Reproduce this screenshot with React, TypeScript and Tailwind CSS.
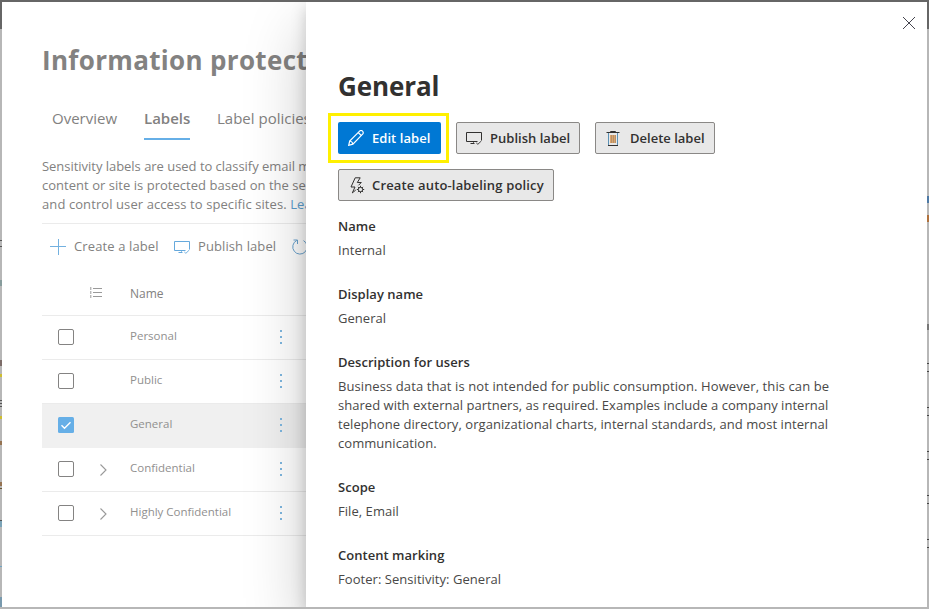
import React from "react";

const rows = [
  { name: "Personal" },
  { name: "Public" },
  { name: "General", checked: true },
  { name: "Confidential", group: true },
  { name: "Highly Confidential", group: true },
];

const leftEdge = [
  "top-[240px] h-px bg-[#555]",
  "top-[246px] h-px bg-[#555]",
  "top-[280px] h-[6px] bg-[#879c9c]",
  "top-[360px] h-[6px] bg-[#7c6c68]",
  "top-[374px] h-[3px] bg-[#cdbd31]",
  "top-[400px] h-px bg-[#555]",
  "top-[403px] h-px bg-[#555]",
  "top-[406px] h-px bg-[#555]",
  "top-[416px] h-[3px] bg-[#cdbd31]",
  "top-[441px] h-[4px] bg-[#957352]",
  "top-[482px] h-[4px] bg-[#957352]",
  "top-[488px] h-px bg-[#665533]",
  "top-[520px] h-px bg-[#555]",
  "top-[521px] h-[6px] bg-[#7ba3b7]",
  "top-[566px] h-px bg-[#6fa5c4]",
  "top-[597px] h-[10px] bg-[#7899ad]",
];

const rightEdge = [
  "top-[196px] h-[7px] bg-[#4d79a5]",
  "top-[215px] h-[7px] bg-[#b0713c]",
  "top-[324px] h-[6px] bg-[#777]",
  "top-[363px] h-px bg-[#444]",
  "top-[371px] h-px bg-[#444]",
  "top-[407px] h-px bg-[#444]",
  "top-[415px] h-px bg-[#444]",
  "top-[451px] h-px bg-[#444]",
  "top-[459px] h-px bg-[#444]",
  "top-[495px] h-px bg-[#444]",
  "top-[503px] h-px bg-[#444]",
  "top-[539px] h-px bg-[#444]",
  "top-[547px] h-px bg-[#444]",
];

function PublishIcon({ className }: { className: string }) {
  return (
    <svg width="16" height="14" viewBox="0 0 16 14" fill="none" stroke="currentColor" className={className}>
      <path d="M11.500 10.500H.5v-9h15v8M4.500 12.500h4" />
      <path d="M7.500 10.500v2" strokeWidth=".7" />
      <path d="M10.300 12l1.600 1.300 3.400-3.300" strokeWidth=".9" />
    </svg>
  );
}

function PencilIcon() {
  return (
    <svg width="16" height="16" viewBox="0 0 16 16" fill="none" stroke="currentColor" strokeWidth="1.200">
      <path d="M.7 15.300l1-4.300L11.600 1.100c.9-.8 2.100-.7 2.900.1s.9 2 .1 2.900L4.900 14.200z" />
      <path d="M10.200 2.500l3.200 3.200M1.700 11c1.500.2 2.900 1.500 3.200 3.200" />
    </svg>
  );
}

function TrashIcon() {
  return (
    <svg width="14" height="17" viewBox="0 0 14 17" fill="none">
      <path d="M4.500 2.500v-1h5v1" stroke="#323130" />
      <path d="M.5 2.500h13" stroke="#323130" />
      <path d="M2.500 3v12.500M11.500 15.500V3" stroke="#5b91b5" />
      <path d="M2 15.500h10" stroke="#323130" />
      <path d="M4 5h6v8H4z" fill="#dca56c" />
      <path d="M5.500 5v8M7.500 5v8M9.500 5v8" stroke="#9c8268" strokeWidth=".6" />
    </svg>
  );
}

function AutoIcon() {
  return (
    <svg width="15" height="17" viewBox="0 0 15 17" fill="none" stroke="#323130">
      <path d="M5.800 13L2.300 15.900 5 10H1L5.200.8h5L7.300 5.500h4L8.500 8.300" />
      <circle cx="10.500" cy="12.500" r="2.200" />
      <path d="M10.500 8.800v1.500M10.500 14.700v1.500M6.800 12.500h1.500M12.700 12.500h1.500M7.900 9.900l1 1M12.100 14.100l1 1M13.100 9.900l-1 1M8.900 14.100l-1 1" />
    </svg>
  );
}

function Action({ children, width }: { children: React.ReactNode; width: string }) {
  return (
    <button
      className={`flex h-8 shrink-0 items-center rounded-[2px] border border-[#8a8886] bg-[#e8e8e8] text-[13px] font-semibold text-[#323130] ${width}`}
    >
      {children}
    </button>
  );
}

function Field({ label, children, className }: { label: string; children: React.ReactNode; className: string }) {
  return (
    <div className={className}>
      <div className="text-[13px] leading-5 font-semibold tracking-[0.03px] text-[#323130]">{label}</div>
      <div className="mt-[5px] text-[13px] leading-[19px] tracking-[0.05px] text-[#494847]">{children}</div>
    </div>
  );
}

export default function App() {
  return (
    <div className="relative h-[609px] w-[929px] overflow-hidden bg-[linear-gradient(#666_29px,#b7b7b7_29px)] p-[2px] font-['Open_Sans','Noto_Sans',sans-serif]">
      {leftEdge.map((c) => (
        <i key={c} className={`absolute left-0 w-[2px] ${c}`} />
      ))}
      {rightEdge.map((c) => (
        <i key={c} className={`absolute right-0 w-[2px] ${c}`} />
      ))}
      <div className="flex h-[605px] w-[925px] overflow-hidden bg-white">
        <main className="w-[304px] shrink-0 pl-10 whitespace-nowrap text-[#828180]">
          <h1 className="mt-[40px] text-[26px] leading-9 font-bold tracking-[0.33px] text-[#838281]">
            Information protection
          </h1>
          <nav className="mt-[22px] flex text-[15px] leading-[36px]">
            <span className="ml-[10px] w-[92px] shrink-0">Overview</span>
            <span className="h-[40px] w-[46px] shrink-0 border-b-2 border-[#66afe7] font-semibold">Labels</span>
            <span className="ml-[27px]">Label policies</span>
          </nav>
          <p className="mt-[17px] text-[13px] leading-[19px]">
            <span className="block tracking-[-0.03px]">Sensitivity labels are used to classify email messages</span>
            <span className="block tracking-[0.03px]">content or site is protected based on the sensitivity</span>
            <span className="block tracking-[0.09px]">
              and control user access to specific sites. <span className="text-[#5d9fd0]">Learn more</span>
            </span>
          </p>
          <div className="mt-[9px] flex h-[47px] items-center border-t border-[#ebebeb] text-[13px]">
            <svg width="16" height="16" viewBox="0 0 16 16" className="ml-2 shrink-0" stroke="#73b1e0">
              <path d="M0 7.500h16M8.500 0v16" />
            </svg>
            <span className="ml-2 w-[100px] shrink-0 tracking-[0.12px]">Create a label</span>
            <PublishIcon className="-mt-px shrink-0 text-[#66a9dc]" />
            <span className="ml-2 w-[94px] shrink-0 tracking-[0.1px]">Publish label</span>
            <svg width="16" height="16" viewBox="0 0 16 16" fill="none" stroke="#69a3cf" className="shrink-0">
              <path d="M4.800 1.400A7.200 7.200 0 1 0 11.500 1.600M1.500 1h4v4" />
            </svg>
          </div>
          <div className="flex h-[46px] items-center border-b border-[#ebebeb]">
            <svg width="12" height="11" viewBox="0 0 12 11" stroke="#9a9a9a" className="ml-12">
              <path d="M3 1.500h9M3 5.500h9M3 9.500h9M.8 0v3M.8 4v3M.8 8v3" />
            </svg>
            <span className="ml-7 pt-[3px] text-[12px] font-medium">Name</span>
          </div>
          {rows.map((r) => (
            <div
              key={r.name}
              className={`flex h-11 items-center border-b pb-[2px] text-[11.5px] ${r.checked ? "border-[#f0f0f0] bg-[#f0f0f0]" : "border-[#ebebeb]"}`}
            >
              {r.checked ? (
                <svg width="16" height="16" viewBox="0 0 16 16" fill="none" className="ml-4 shrink-0">
                  <rect width="16" height="16" rx="1.500" fill="#66afe7" />
                  <path d="M3.500 8.200l3 3 6-6" stroke="white" strokeWidth="1.400" />
                </svg>
              ) : (
                <span className="ml-4 size-4 shrink-0 rounded-[2px] border border-[#848382]" />
              )}
              <span className="flex w-[56px] shrink-0 items-center pl-[26px]">
                {r.group && (
                  <svg width="7" height="12" viewBox="0 0 7 12" fill="none" stroke="#999" strokeWidth="1.100" className="mt-[2px]">
                    <path d="M.5.5L6 6 .5 11.500" />
                  </svg>
                )}
              </span>
              <span className="w-[149px] shrink-0 -translate-y-px text-[#91908f]">{r.name}</span>
              <span className="ml-[1px] flex flex-col gap-[4px]">
                <i className="size-[2px] bg-[#7eb6df]" />
                <i className="size-[2px] bg-[#7eb6df]" />
                <i className="size-[2px] bg-[#7eb6df]" />
              </span>
            </div>
          ))}
        </main>
        <aside className="relative w-[621px] shrink-0 bg-white px-8 shadow-[0_25.6px_57.6px_rgba(0,0,0,0.22),0_4.8px_14.4px_rgba(0,0,0,0.18)]">
          <svg width="12" height="12" viewBox="0 0 12 12" stroke="#45454f" className="absolute top-[15px] right-[12px]">
            <path d="M0 0l12 12M12 0L0 12" />
          </svg>
          <h2 className="pt-[66px] text-[26px] leading-9 font-bold tracking-[-0.1px] text-[#323130]">General</h2>
          <div className="mt-[18px] flex">
            <div className="relative w-[118px]">
              <i className="absolute -top-[9px] -left-[10px] h-[50px] w-[121px] border-[3px] border-[#fff000]" />
              <button className="flex h-8 w-[103px] items-center rounded-[2px] bg-[#0078d4] pl-[10px] text-[13px] font-semibold whitespace-nowrap text-white">
                <PencilIcon />
                <span className="ml-2 pt-[2px] tracking-[0.05px]">Edit label</span>
              </button>
            </div>
            <Action width="w-[124px]">
              <PublishIcon className="ml-[9px] shrink-0" />
              <span className="ml-2 pt-[2px] whitespace-nowrap tracking-[0.02px]">Publish label</span>
            </Action>
            <span className="w-[15px]" />
            <Action width="w-[120px]">
              <span className="ml-[10px] shrink-0">
                <TrashIcon />
              </span>
              <span className="ml-[10px] pt-[2px] whitespace-nowrap">Delete label</span>
            </Action>
          </div>
          <div className="mt-[15px]">
            <Action width="w-[216px]">
              <span className="ml-[11px] shrink-0">
                <AutoIcon />
              </span>
              <span className="ml-[7px] pt-[2px] whitespace-nowrap tracking-[0.16px]">Create auto-labeling policy</span>
            </Action>
          </div>
          <Field label="Name" className="mt-[15px]">Internal</Field>
          <Field label="Display name" className="mt-[24px]">General</Field>
          <Field label="Description for users" className="mt-[24px]">
            <div className="whitespace-nowrap">
              <span className="block tracking-[0.1px]">
                Business data that is not intended for public consumption. However, this can be
              </span>
              <span className="block tracking-[0.03px]">
                shared with external partners, as required. Examples include a company internal
              </span>
              <span className="block tracking-[0.06px]">
                telephone directory, organizational charts, internal standards, and most internal
              </span>
              <span className="block">communication.</span>
            </div>
          </Field>
          <Field label="Scope" className="mt-[24px]">File, Email</Field>
          <Field label="Content marking" className="mt-[24px]">Footer: Sensitivity: General</Field>
        </aside>
      </div>
    </div>
  );
}
